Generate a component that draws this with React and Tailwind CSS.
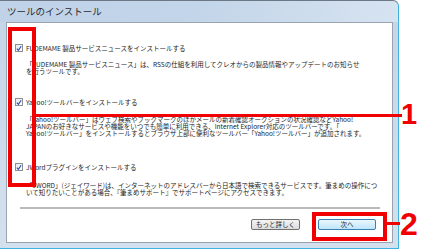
import React from 'react';

const CheckBox = () => (
  <span className="w-[8px] h-[8px] shrink-0 border border-[#8e8f8f] bg-linear-to-br from-[#e6e9ee] to-white flex items-center justify-center">
    <svg width="7" height="7" viewBox="0 0 7 7">
      <path d="M1 3.6 L2.8 5.6 L6 0.8" fill="none" stroke="#2d49b8" strokeWidth="1.3" />
    </svg>
  </span>
);

const Option = ({ label, className = '' }) => (
  <div className={className}>
    <div className="flex items-center gap-[3px] h-[8px]">
      <CheckBox />
      <span className="text-[6.5px] leading-[8px] whitespace-nowrap">{label}</span>
    </div>
  </div>
);

const Desc = ({ lines, className = '' }) => (
  <div className={'pl-[11px] text-[6.5px] leading-[7px] whitespace-nowrap ' + className}>
    {lines.map((l, i) => (
      <div key={i}>{l}</div>
    ))}
  </div>
);

const App = () => {
  return (
    <div className="relative w-[421px] h-[250px] bg-white overflow-hidden font-['Noto_Sans_CJK_JP','Liberation_Sans',sans-serif] text-[#1c1c1c]">
      {/* window */}
      <div className="w-[399px] h-[249px] flex flex-col rounded-tr-[6px] border-t border-r border-b border-[#3fb3dc] border-t-[#6d7886] bg-linear-to-b from-[#c4d5e8] to-[#d3e0ee]">
        {/* title bar */}
        <div className="h-[21px] shrink-0 flex items-center pl-[7px] rounded-tr-[6px] bg-linear-to-r from-[#bfd2e8] via-[#c3d5e9] to-[#d6e3f1]">
          <span className="text-[9.5px] text-[#2b2b2b]">ツールのインストール</span>
        </div>

        {/* panel */}
        <div className="flex-1 ml-[6px] mr-[5px] mb-[5px] border border-[#9aa3ad] bg-white flex flex-col pl-[8px] pr-[10px]">
          <Option className="mt-[21px]" label="FUDEMAME 製品サービスニュースをインストールする" />
          <Desc
            className="mt-[9px]"
            lines={[
              '「FUDEMAME 製品サービスニュース」は、RSSの仕組を利用してクレオからの製品情報やアップデートのお知らせ',
              'を行うツールです。',
            ]}
          />

          <Option className="mt-[23px]" label="Yahoo!ツールバーをインストールする" />
          <Desc
            className="mt-[10px]"
            lines={[
              '「Yahoo!ツールバー」はウェブ検索やブックマークのほかメールの新着確認オークションの状況確認などYahoo!',
              'JAPANのお好きなサービスや機能をいつでも簡単に利用できる、Internet Explorer対応のツールバーです。「',
              'Yahoo!ツールバー」をインストールするとブラウザ上部に便利なツールバー「Yahoo!ツールバー」が追加されます。',
            ]}
          />

          <Option className="mt-[26px]" label="JWordプラグインをインストールする" />
          <Desc
            className="mt-[11px]"
            lines={[
              '「JWORD」(ジェイワード)は、インターネットのアドレスバーから日本語で検索できるサービスです。筆まめの操作につ',
              'いて知りたいことがある場合、『筆まめサポート』でサポートページにアクセスできます。',
            ]}
          />

          <div className="mt-[11px] ml-[5px] mr-[2px] h-[2px] bg-[#b9b9b9]" />

          <div className="mt-[10px] flex justify-end gap-[18px] pr-[6px]">
            <button className="w-[49px] h-[11px] rounded-[2px] border border-[#707070] bg-linear-to-b from-[#f4f4f4] to-[#dcdcdc] text-[6.5px] leading-[9px] text-[#1c1c1c]">
              もっと詳しく
            </button>
            <button className="w-[58px] h-[11px] rounded-[2px] border border-[#3c7fb1] bg-linear-to-b from-[#eaf6fd] to-[#bee6fd] text-[6.5px] leading-[9px] text-[#1c1c1c]">
              次へ
            </button>
          </div>
        </div>
      </div>

      {/* callout 1 */}
      <div className="absolute left-[8px] top-[27px] w-[28px] h-[160px] border-[4px] border-[#f00000]" />
      <div className="absolute left-[36px] top-[114px] w-[366px] h-[3px] bg-[#f00000]" />
      <div className="absolute left-[401px] top-[100px] text-[29px] leading-[29px] font-bold text-[#f00000] font-['Liberation_Sans',sans-serif]">
        1
      </div>

      {/* callout 2 */}
      <div className="absolute left-[312px] top-[212px] w-[75px] h-[29px] border-[4px] border-[#f00000]" />
      <div className="absolute left-[387px] top-[222px] w-[13px] h-[3px] bg-[#f00000]" />
      <div className="absolute left-[400px] top-[208px] text-[32px] leading-[32px] font-bold text-[#f00000] font-['Liberation_Sans',sans-serif]">
        2
      </div>
    </div>
  );
};

export default App;
